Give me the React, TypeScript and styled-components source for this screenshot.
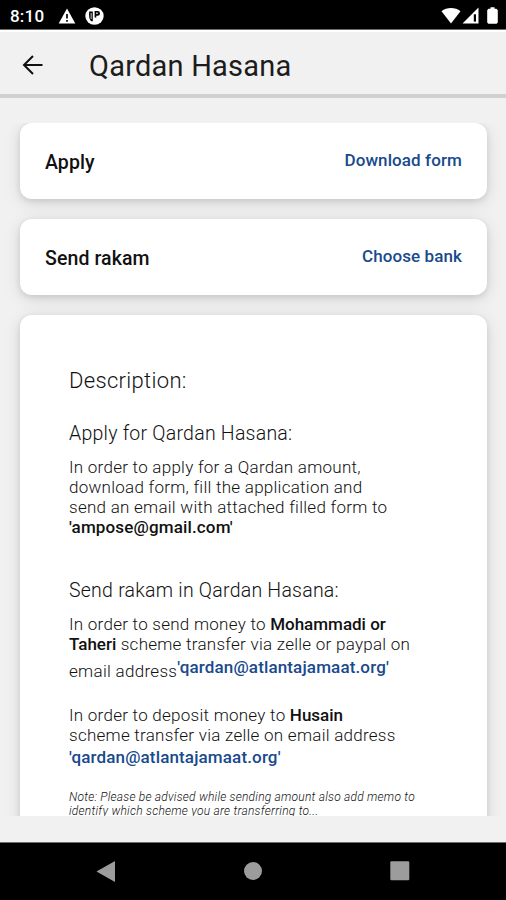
import React from "react";
import styled, { createGlobalStyle } from "styled-components";

const GlobalStyle = createGlobalStyle`
  * { box-sizing: border-box; }
  body { margin: 0; background: #f1f1f1; font-family: Roboto, sans-serif; color: #111; }
`;

const Screen = styled.div`
  width: 506px;
  height: 900px;
  display: flex;
  flex-direction: column;
  overflow: hidden;
  background: #f1f1f1;
`;

const StatusBar = styled.div`
  height: 30px;
  flex: none;
  display: flex;
  align-items: center;
  padding: 2px 8px 0 10px;
  background: #000;
  border-bottom: 1px solid #6d6d6d;
  color: #fff;
`;

const Clock = styled.span`
  width: 48px;
  font-size: 17px;
  font-weight: 500;
  line-height: 20px;
  letter-spacing: 0.2px;
`;

const StatusIcon = styled.svg<{ $gap?: number }>`
  display: block;
  flex: none;
  margin-left: ${(p) => p.$gap ?? 0}px;
`;

const Spacer = styled.div`
  flex: 1;
`;

const Header = styled.header`
  height: 68px;
  flex: none;
  display: flex;
  align-items: center;
  padding: 4px 22px 0;
  border-top: 2px solid #fff;
  border-bottom: 4px solid #d0d0d0;
`;

const Title = styled.h1`
  margin: 2px 0 0 45px;
  font-size: 29px;
  font-weight: 400;
  line-height: 34px;
  letter-spacing: 0.22px;
  white-space: nowrap;
  color: #1c1c1c;
`;

const Content = styled.main`
  height: 693px;
  margin: 25px 0 26px;
  flex: none;
  display: flex;
  flex-direction: column;
  gap: 20px;
  padding: 0 19px 0 20px;
  overflow: hidden;
`;

const Card = styled.section`
  flex: none;
  background: #fff;
  border-radius: 12px;
  box-shadow: 0 4px 18px rgba(0, 0, 0, 0.11), 0 2px 6px rgba(0, 0, 0, 0.11);
`;

const ActionCard = styled(Card)`
  height: 76px;
  display: flex;
  align-items: center;
  justify-content: space-between;
  padding: 0 25px;
`;

const ActionLabel = styled.span`
  font-size: 19.5px;
  font-weight: 500;
  line-height: 24px;
  letter-spacing: 0.1px;
  padding-top: 3px;
`;

const ActionLink = styled.a`
  font-size: 17px;
  font-weight: 500;
  line-height: 20px;
  letter-spacing: 0.1px;
  padding-bottom: 2px;
  color: #184a8c;
`;

const DetailsCard = styled(Card)`
  height: 560px;
  padding: 53px 0 0 49px;
  white-space: nowrap;
`;

const Heading = styled.h2<{ $size: number; $top?: number; $track?: number }>`
  margin: ${(p) => p.$top ?? 0}px 0 0;
  font-size: ${(p) => p.$size}px;
  font-weight: 300;
  line-height: 26px;
  letter-spacing: ${(p) => p.$track ?? 0}px;
`;

const Paragraph = styled.p<{ $top: number }>`
  margin: ${(p) => p.$top}px 0 0;
  font-size: 17px;
  font-weight: 300;
  line-height: 20px;
`;

const Line = styled.span<{ $track?: number; $height?: number }>`
  display: block;
  letter-spacing: ${(p) => p.$track ?? 0.26}px;
  line-height: ${(p) => (p.$height ? p.$height + "px" : "inherit")};
`;

const Strong = styled.strong<{ $track?: number }>`
  font-weight: 500;
  letter-spacing: ${(p) => p.$track ?? 0}px;
`;

const MailRow = styled.span`
  display: flex;
  align-items: flex-start;
`;

const Mail = styled.a`
  font-weight: 500;
  letter-spacing: 0.14px;
  color: #184a8c;
`;

const RowText = styled.span`
  padding-top: 7px;
  letter-spacing: 0.3px;
`;

const MailText = styled(Mail)`
  padding-top: 3px;
`;

const Note = styled.p`
  margin: 20px 0 0;
  font-size: 12px;
  line-height: 14px;
  font-style: italic;
  font-weight: 300;
`;

const NavBar = styled.nav`
  height: 58px;
  flex: none;
  display: flex;
  align-items: center;
  justify-content: space-between;
  padding: 0 96px 1px;
  background: #000;
  border-top: 1px solid #6d6d6d;
`;

export default function App() {
  return (
    <Screen>
      <GlobalStyle />
      <StatusBar>
        <Clock>8:10</Clock>
        <StatusIcon width="18" height="16" viewBox="0 0 18 16">
          <path d="M9 0.5 17.3 15.5H0.7Z" fill="#fff" />
          <path d="M9 6v4.5M9 12v1.8" stroke="#000" strokeWidth="1.7" />
        </StatusIcon>
        <StatusIcon $gap={9} width="19" height="18" viewBox="0 0 19 18">
          <ellipse cx="9.5" cy="9" rx="9.2" ry="8.8" fill="#fff" />
          <path d="M4.2 4.6h3.6v9.6H6.2C4.6 12.8 3.8 10.6 4.2 4.6ZM9.6 4h3a2.4 2.4 0 0 1 0 4.8h-1.3v1.8H9.6Z" fill="#000" />
          <path d="M5.7 6h.8v6h-.8zM11.3 5.6h1.3v1.5h-1.3z" fill="#fff" />
        </StatusIcon>
        <Spacer />
        <StatusIcon width="20" height="17" viewBox="0 0 20 17">
          <path d="M0.5 4.2C5.8-.1 14.2-.1 19.5 4.2L10 16.5Z" fill="#fff" />
        </StatusIcon>
        <StatusIcon $gap={1} width="17" height="17" viewBox="0 0 17 17">
          <path d="M16.5 0.5V16.5H0.5Z" fill="#fff" />
          <path d="M11.8 7.3h2.2v7.3h-2.2z" fill="#000" />
        </StatusIcon>
        <StatusIcon $gap={8} width="11" height="17" viewBox="0 0 11 17">
          <path d="M3.5 0.3h4v1.5H9.5l1.3 1.4V15.5L9.6 16.7H1.4L.2 15.5V3.2L1.5 1.8h2Z" fill="#fff" />
        </StatusIcon>
      </StatusBar>

      <Header>
        <svg width="22" height="22" viewBox="0 0 22 22" fill="none" stroke="#111" strokeWidth="2">
          <path d="M20.5 11H2.3M11 2 2 11l9 9" />
        </svg>
        <Title>Qardan Hasana</Title>
      </Header>

      <Content>
        <ActionCard>
          <ActionLabel>Apply</ActionLabel>
          <ActionLink>Download form</ActionLink>
        </ActionCard>
        <ActionCard>
          <ActionLabel>Send rakam</ActionLabel>
          <ActionLink>Choose bank</ActionLink>
        </ActionCard>
        <DetailsCard>
          <Heading $size={22} $track={0.32}>Description:</Heading>
          <Heading $size={19.5} $top={27} $track={0.24}>Apply for Qardan Hasana:</Heading>
          <Paragraph $top={10}>
            <Line>In order to apply for a Qardan amount,</Line>
            <Line>download form, fill the application and</Line>
            <Line>send an email with attached filled form to</Line>
            <Strong $track={0.15}>'ampose@gmail.com'</Strong>
          </Paragraph>
          <Heading $size={19.5} $top={41} $track={0.24}>Send rakam in Qardan Hasana:</Heading>
          <Paragraph $top={10}>
            <Line>In order to send money to <Strong>Mohammadi or</Strong></Line>
            <Line><Strong>Taheri</Strong> scheme transfer via zelle or paypal on</Line>
            <MailRow>
              <RowText>email address</RowText>
              <MailText>'qardan@atlantajamaat.org'</MailText>
            </MailRow>
          </Paragraph>
          <Paragraph $top={24}>
            <Line>In order to deposit money to <Strong>Husain</Strong></Line>
            <Line>scheme transfer via zelle on email address</Line>
            <Line $height={25}><Mail>'qardan@atlantajamaat.org'</Mail></Line>
          </Paragraph>
          <Note>
            <Line $track={0.23}>Note: Please be advised while sending amount also add memo to</Line>
            <Line $track={0.25}>identify which scheme you are transferring to...</Line>
          </Note>
        </DetailsCard>
      </Content>

      <NavBar>
        <svg width="19" height="21" viewBox="0 0 19 21">
          <path d="M19 0V21L0.5 10.5Z" fill="#9c9c9c" />
        </svg>
        <svg width="18" height="18" viewBox="0 0 18 18">
          <circle cx="9" cy="9" r="9" fill="#9c9c9c" />
        </svg>
        <svg width="20" height="20" viewBox="0 0 20 20">
          <rect x="0.3" y="0.3" width="19" height="19" rx="1.2" fill="#9c9c9c" />
        </svg>
      </NavBar>
    </Screen>
  );
}
